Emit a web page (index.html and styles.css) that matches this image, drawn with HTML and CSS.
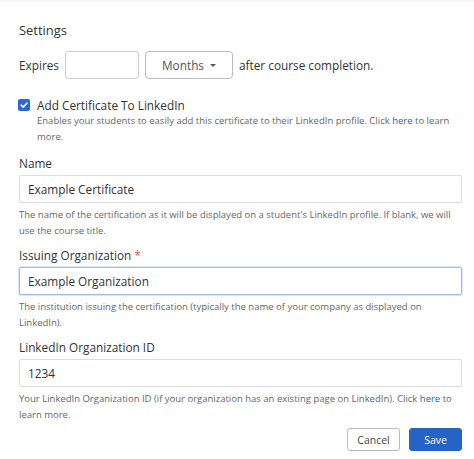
FILE: index.html
```html
<!DOCTYPE html>
<html>
<head>
<meta charset="utf-8">
<link rel="stylesheet" href="styles.css">
</head>
<body>
<div class="panel">
  <h2 class="title">Settings</h2>
  <div class="expires">
    <span class="lbl">Expires</span>
    <div class="num-input"></div>
    <div class="select-btn">Months <span class="caret"></span></div>
    <span class="lbl">after course completion.</span>
  </div>
  <div class="check-row">
    <span class="checkbox"><svg viewBox="0 0 12 12" width="12" height="12"><path d="M3.2 6.2 L5.2 8.1 L8.9 4.2" fill="none" stroke="#fff" stroke-width="1.6" stroke-linecap="round" stroke-linejoin="round"/></svg></span>
    <div class="check-text">
      <div class="check-label">Add Certificate To LinkedIn</div>
      <div class="help">Enables your students to easily add this certificate to their LinkedIn profile. Click <a class="link">here</a> to learn more.</div>
    </div>
  </div>
  <div class="field">
    <div class="flabel">Name</div>
    <div class="input">Example Certificate</div>
    <div class="help">The name of the certification as it will be displayed on a student's LinkedIn profile. If blank, we will use the course title.</div>
  </div>
  <div class="field">
    <div class="flabel">Issuing Organization <span class="req">*</span></div>
    <div class="input focus">Example Organization</div>
    <div class="help">The institution issuing the certification (typically the name of your company as displayed on LinkedIn).</div>
  </div>
  <div class="field">
    <div class="flabel">LinkedIn Organization ID</div>
    <div class="input">1234</div>
    <div class="help">Your LinkedIn Organization ID (if your organization has an existing page on LinkedIn). Click <a class="link">here</a> to learn more.</div>
  </div>
  <div class="actions">
    <div class="btn cancel">Cancel</div>
    <div class="btn save">Save</div>
  </div>
</div>
</body>
</html>
```
FILE: styles.css
```css
html, body {
  margin: 0;
  padding: 0;
  background: #fff;
}
body {
  font-family: "Open Sans", "Noto Sans", sans-serif;
  color: #333;
  border-top: 2px solid #f4f4f4;
}
.panel {
  padding: 18px 12px 0 19px;
}
.title {
  margin: 0;
  font-size: 12.9px;
  font-weight: 400;
  line-height: 20px;
  color: #333;
}
.expires {
  display: flex;
  align-items: center;
  margin-top: 11px;
  gap: 6px;
  font-size: 11.8px;
}
.num-input {
  width: 72px;
  height: 26px;
  border: 1px solid #ccc;
  border-radius: 3px;
}
.select-btn {
  width: 86px;
  height: 26px;
  border: 1px solid #bbb;
  border-radius: 4px;
  display: flex;
  align-items: center;
  justify-content: center;
  color: #555;
  gap: 6px;
}
.caret {
  width: 0;
  height: 0;
  border-left: 3.5px solid transparent;
  border-right: 3.5px solid transparent;
  border-top: 3.5px solid #555;
}
.check-row {
  display: flex;
  align-items: flex-start;
  margin-top: 18px;
  gap: 7px;
}
.checkbox {
  width: 12px;
  height: 12px;
  background: #2c6ad2;
  border-radius: 2px;
  margin-top: 2px;
  margin-left: -1px;
  flex: none;
  display: flex;
}
.check-label {
  font-size: 11.8px;
  line-height: 16px;
}
.help {
  font-size: 9.5px;
  line-height: 16px;
  color: #666;
}
.link {
  color: #1f5fbf;
}
.field {
  margin-top: 10px;
}
.field + .field {
  margin-top: 8px;
}
.flabel {
  font-size: 11.8px;
  line-height: 16px;
  margin-bottom: 4px;
}
.req { color: #d9534f; }
.input {
  height: 26px;
  border: 1px solid #ddd;
  border-radius: 2px;
  padding: 0 8px;
  font-size: 11.8px;
  line-height: 26px;
  color: #333;
  margin-bottom: 4px;
}
.input.focus {
  border-color: #9bbbe8;
  box-shadow: 0 0 0 1px #dbe7f7;
}
.actions {
  display: flex;
  justify-content: flex-end;
  gap: 9px;
  margin-top: 5px;
}
.btn {
  height: 21px;
  width: 51px;
  border-radius: 3px;
  font-size: 10.5px;
  display: flex;
  align-items: center;
  justify-content: center;
}
.cancel {
  border: 1px solid #bbb;
  color: #444;
}
.save {
  background: #2563c7;
  border: 1px solid #2563c7;
  color: #fff;
}
```
